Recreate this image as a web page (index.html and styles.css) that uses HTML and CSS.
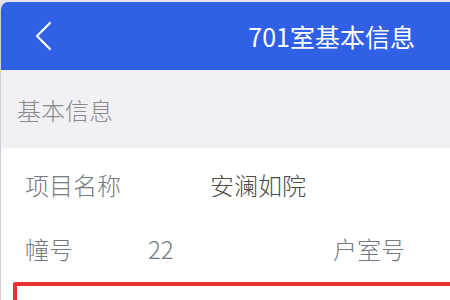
FILE: index.html
```html
<!DOCTYPE html>
<html lang="zh-CN">
<head>
<meta charset="utf-8">
<title>701室基本信息</title>
<link rel="stylesheet" href="styles.css">
</head>
<body>
<div class="screen">
  <header class="topbar">
    <svg class="back" width="20" height="30" viewBox="0 0 20 30" aria-hidden="true">
      <polyline points="15,2 2,15 15,28" fill="none" stroke="#ffffff" stroke-width="2.2" stroke-linecap="round" stroke-linejoin="round"/>
    </svg>
    <h1 class="title">701室基本信息</h1>
  </header>
  <div class="section-head">基本信息</div>
  <div class="card">
    <div class="row">
      <span class="label col-wide">项目名称</span>
      <span class="value dark">安澜如院</span>
    </div>
    <div class="row">
      <span class="label col-narrow">幢号</span>
      <span class="value col-mid">22</span>
      <span class="label">户室号</span>
    </div>
    <div class="highlight"></div>
  </div>
</div>
</body>
</html>
```
FILE: styles.css
```css
html, body {
  margin: 0;
  padding: 0;
  width: 450px;
  height: 300px;
  overflow: hidden;
  background: #e4e4ea;
  font-family: "Noto Sans CJK SC", "Noto Sans", sans-serif;
}
.screen {
  margin-top: 2px;
  height: 298px;
  border-top-left-radius: 8px;
  border-left: 1px solid #cfcfd4;
  overflow: hidden;
  background: #ffffff;
}
.topbar {
  height: 68px;
  background: #2f60e6;
  display: flex;
  align-items: center;
  padding: 0 35px 0 34px;
}
.back {
  display: block;
  flex: none;
}
.title {
  margin: 0 0 0 auto;
  color: #ffffff;
  font-size: 25px;
  font-weight: 400;
  line-height: 1;
}
.section-head {
  height: 78px;
  background: #f0f0f5;
  display: flex;
  align-items: center;
  padding-left: 16px;
  font-size: 24px;
  font-weight: 300;
  color: #8a8a8a;
}
.card {
  background: #ffffff;
  padding-top: 4px;
}
.row {
  height: 64px;
  display: flex;
  align-items: center;
  padding-left: 24px;
  font-size: 24px;
  font-weight: 300;
}
.label {
  color: #737a80;
}
.value {
  color: #737a80;
}
.value.dark {
  color: #4a4a4a;
}
.col-wide {
  width: 185px;
  flex: none;
}
.col-narrow {
  width: 123px;
  flex: none;
}
.col-mid {
  width: 185px;
  flex: none;
}
.highlight {
  margin: 2px 0 0 12px;
  height: 40px;
  width: 480px;
  border: 4px solid #e83232;
  border-radius: 2px;
}
```
